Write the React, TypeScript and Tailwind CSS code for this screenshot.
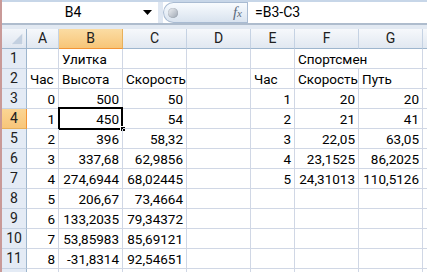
import React from 'react';

const COLS = ['A', 'B', 'C', 'D', 'E', 'F', 'G', ''];

const ROWS: string[][] = [
  ['', 'Улитка', '', '', '', 'Спортсмен', '', ''],
  ['Час', 'Высота', 'Скорость', '', 'Час', 'Скорость', 'Путь', ''],
  ['0', '500', '50', '', '1', '20', '20', ''],
  ['1', '450', '54', '', '2', '21', '41', ''],
  ['2', '396', '58,32', '', '3', '22,05', '63,05', ''],
  ['3', '337,68', '62,9856', '', '4', '23,1525', '86,2025', ''],
  ['4', '274,6944', '68,02445', '', '5', '24,31013', '110,5126', ''],
  ['5', '206,67', '73,4664', '', '', '', '', ''],
  ['6', '133,2035', '79,34372', '', '', '', '', ''],
  ['7', '53,85983', '85,69121', '', '', '', '', ''],
  ['8', '-31,8314', '92,54651', '', '', '', '', ''],
  ['', '', '', '', '', '', '', ''],
];

const isNumber = (v: string) => /^-?\d/.test(v);

function FormulaBar() {
  return (
    <div>
      <div className="h-[2px] bg-[#c7d6e8]" />
      <div className="flex h-[21px]">
        {/* Поле имени */}
        <div className="flex w-[156px] items-center bg-white">
          <div className="flex-1 pl-[1px] text-center text-[14px] text-black">B4</div>
          <svg width="9" height="5" viewBox="0 0 9 5" className="mr-[6px]">
            <path d="M0 0h9L4.5 5z" fill="#000" />
          </svg>
        </div>
        <div className="w-[5px] bg-[#dfe7f2]" />
        {/* Кнопка и fx */}
        <div className="flex w-[84px] items-center rounded-l-full border border-r-0 border-[#a9bbd2] bg-gradient-to-b from-[#f8fbfe] to-[#d9e3ef]">
          <div className="ml-[4px] h-[10px] w-[10px] rounded-full bg-gradient-to-br from-[#f2f4f7] to-[#9da6b2] shadow-[inset_0_0_1px_#6f7985]" />
          <div className="ml-auto mr-[5px] font-['Liberation_Serif',serif] text-[15px] italic leading-none text-[#5b6a7c]">
            f<span className="text-[11px]">x</span>
          </div>
        </div>
        {/* Строка формул */}
        <div className="flex flex-1 items-center border-l border-[#a9bbd2] bg-white pl-[7px] text-[14px] text-black">
          =B3-C3
        </div>
      </div>
      <div className="h-[2px] bg-[#aebccd]" />
      <div className="h-[4px] bg-[#e2e9f2]" />
    </div>
  );
}

function Sheet() {
  return (
    <div className="grid auto-rows-[20px] grid-cols-[25px_32px_64px_64px_64px_44px_64px_64px_40px]">
      {/* Угол "выделить всё" */}
      <div className="relative border-b border-r border-[#9eb6ce] bg-gradient-to-b from-[#f3f6fa] to-[#dfe6f0]">
        <svg width="12" height="12" viewBox="0 0 12 12" className="absolute bottom-[3px] right-[3px]">
          <path d="M12 0V12H0z" fill="#c3d0e0" />
          <path d="M12 0V12H0" fill="none" stroke="#ffffff" strokeWidth="1" />
        </svg>
      </div>
      {COLS.map((c, i) =>
        c === 'B' ? (
          <div
            key={i}
            className="flex items-center justify-center border-b border-r border-b-[#f29436] border-r-[#e8b05a] bg-gradient-to-b from-[#fbdca3] to-[#f7c577] text-[14px] text-[#202020]"
          >
            {c}
          </div>
        ) : (
          <div
            key={i}
            className="flex items-center justify-center border-b border-r border-b-[#9eb6ce] border-r-[#c5d2e3] bg-gradient-to-b from-[#f6f8fb] to-[#e1e8f1] text-[14px] text-[#202020]"
          >
            {c}
          </div>
        )
      )}
      {ROWS.map((row, r) => (
        <React.Fragment key={r}>
          {r === 3 ? (
            <div className="flex items-center justify-center border-b border-r border-b-[#e8b05a] border-r-[#f29436] bg-gradient-to-b from-[#fbd593] to-[#f8c67a] text-[14px] text-[#202020]">
              {r + 1}
            </div>
          ) : (
            <div className="flex items-center justify-center border-b border-r border-b-[#c5d2e3] border-r-[#9eb6ce] bg-[#e4ebf5] text-[14px] text-[#202020]">
              {r < 11 ? r + 1 : ''}
            </div>
          )}
          {row.map((v, c) => {
            const spill = r === 0 && c === 5;
            const selected = r === 3 && c === 1;
            return (
              <div
                key={c}
                className={
                  'relative flex items-center whitespace-nowrap border-b border-[#d0d7e5] pt-[1px] text-[13.5px] text-black ' +
                  (spill ? '' : 'border-r ') +
                  (isNumber(v) ? 'justify-end pr-[3px]' : 'pl-[3px]')
                }
              >
                {v}
                {selected && (
                  <>
                    <div className="absolute bottom-[-2px] left-[-1px] right-[-1px] top-[-2px] border-2 border-black" />
                    <div className="absolute bottom-[-4px] right-[-4px] h-[6px] w-[6px] border border-white bg-black" />
                  </>
                )}
              </div>
            );
          })}
        </React.Fragment>
      ))}
    </div>
  );
}

export default function App() {
  return (
    <div className="flex h-[272px] w-[427px] overflow-hidden bg-white font-['Roboto',sans-serif]">
      <div className="w-[2px] shrink-0 bg-[#c99a98]" />
      <div className="flex-1 overflow-hidden">
        <FormulaBar />
        <Sheet />
      </div>
    </div>
  );
}
